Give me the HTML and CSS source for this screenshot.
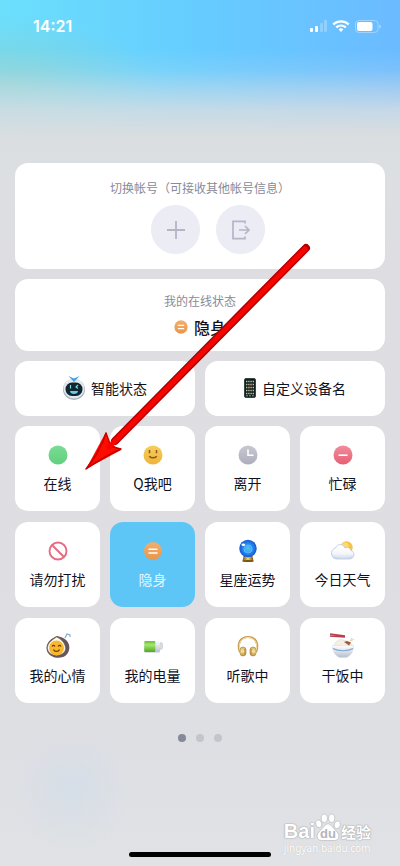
FILE: index.html
```html
<!DOCTYPE html>
<html lang="zh-CN">
<head>
  <meta charset="UTF-8" />
  <meta name="viewport" content="width=device-width, initial-scale=1.0"/>
  <title>我的在线状态</title>
  <link rel="stylesheet" href="styles.css">
</head>
<body>

<svg class="defs" aria-hidden="true">
  <defs>
    <linearGradient id="green" x2="0" y2="1"><stop stop-color="#79dc92"/><stop offset="1" stop-color="#62cf80"/></linearGradient>
    <linearGradient id="yellow" x2="0" y2="1"><stop stop-color="#f4cf5c"/><stop offset="1" stop-color="#efb43b"/></linearGradient>
    <linearGradient id="grey" x2="0" y2="1"><stop stop-color="#c8c8d2"/><stop offset="1" stop-color="#adaebc"/></linearGradient>
    <linearGradient id="red" x2="0" y2="1"><stop stop-color="#f08d9b"/><stop offset="1" stop-color="#e75f73"/></linearGradient>
    <linearGradient id="orange" x2="0" y2="1"><stop stop-color="#f3ae6e"/><stop offset="1" stop-color="#e99648"/></linearGradient>
    <linearGradient id="gold" x2="0" y2="1"><stop stop-color="#d8b568"/><stop offset=".5" stop-color="#f5dfa0"/><stop offset="1" stop-color="#b98b34"/></linearGradient>
    <linearGradient id="base" x2="1" y2="0"><stop stop-color="#7c5414"/><stop offset=".5" stop-color="#f3d26b"/><stop offset="1" stop-color="#7a4d12"/></linearGradient>
    <radialGradient id="ball"><stop stop-color="#52c3fa"/><stop offset=".6" stop-color="#2484ee"/><stop offset="1" stop-color="#1558cf"/></radialGradient>
    <linearGradient id="cell" x2="0" y2="1"><stop stop-color="#69bd35"/><stop offset=".35" stop-color="#a6e871"/><stop offset="1" stop-color="#4ea91e"/></linearGradient>
    <linearGradient id="silver" x2="0" y2="1"><stop stop-color="#ffffff"/><stop offset="1" stop-color="#b7bfce"/></linearGradient>
    <linearGradient id="cloud" x2="0" y2="1"><stop stop-color="#ffffff"/><stop offset=".6" stop-color="#f6f7fb"/><stop offset="1" stop-color="#cfd9ec"/></linearGradient>
  </defs>
</svg>

<header class="status-bar">
  <time class="clock">14:21</time>
  <div class="signals">
    <svg width="17" height="12" viewBox="0 0 17 12" fill="#fff">
      <rect x="0" y="8" width="3" height="4" rx="1"/>
      <rect x="5" y="6" width="3" height="6" rx="1"/>
      <rect x="10" y="3" width="3" height="9" rx="1" opacity=".25"/>
      <rect x="14" y="0" width="3" height="12" rx="1" opacity=".25"/>
    </svg>
    <svg width="18" height="12" viewBox="0 0 18 12" fill="none" stroke="#fff" stroke-width="2.2">
      <path d="M1.2 4.4a11.3 11.3 0 0 1 15.6 0M4.2 7.4a7 7 0 0 1 9.6 0"/>
      <path d="M6.600 9.300a3.500 3.500 0 0 1 4.800 0L9 12z" fill="#fff" stroke="none"/>
    </svg>
    <svg width="26" height="13" viewBox="0 0 26 13">
      <rect x=".5" y=".5" width="22.500" height="12" rx="3.500" fill="none" stroke="#fff" opacity=".35"/>
      <rect x="2" y="2" width="15.500" height="9" rx="2" fill="#fff"/>
      <path d="M24.300 4.500c2 .7 2 3.300 0 4z" fill="#fff" opacity=".5"/>
    </svg>
  </div>
</header>

<main class="panel">
  <section class="card accounts">
    <h2 class="caption">切换帐号（可接收其他帐号信息）</h2>
    <div class="account-actions">
      <button class="round" type="button" aria-label="添加帐号">
        <svg width="18" height="18" viewBox="0 0 18 18" stroke="#b4b5c7" stroke-width="1.800"><path d="M9 0v18M0 9h18"/></svg>
      </button>
      <button class="round" type="button" aria-label="退出帐号">
        <svg width="20" height="20" viewBox="0 0 20 20" fill="none" stroke="#b4b5c7" stroke-width="1.700"><path d="M14 3.500V1.300H2v17.400h12v-2.200M8 10h10M14 6l4 4-4 4"/></svg>
      </button>
    </div>
  </section>

  <section class="card current">
    <h2 class="caption">我的在线状态</h2>
    <p class="current-state">
      <svg width="14" height="14" viewBox="0 0 20 20"><circle cx="10" cy="10" r="9.500" fill="url(#orange)"/><path d="M5.500 7.800h9M5.500 12.200h9" stroke="#fff" stroke-width="1.800"/></svg>
      隐身
    </p>
  </section>

  <div class="wide-row">
    <button class="card wide" type="button">
      <svg width="22" height="24" viewBox="0 0 22 24">
        <ellipse cx="11" cy="13.500" rx="11" ry="10.500" fill="#a9b4bc"/>
        <ellipse cx="11" cy="12.500" rx="10.500" ry="10" fill="#e3e9ec"/>
        <rect x="2.500" y="6.500" width="17" height="13.500" rx="6.500" fill="#10272f"/>
        <path d="M5.500 0l5.500 2.500L16.500 0 11 6z" fill="#3fa1ee"/>
        <path d="M7.500 9v3.500M15 9l-2 2 2 1.500" stroke="#75dbed" stroke-width="1.200" fill="none"/>
        <path d="M7 15h8c0 4-8 4-8 0z" fill="#69c9f5"/>
      </svg>
      智能状态
    </button>
    <button class="card wide" type="button">
      <svg width="12" height="20" viewBox="0 0 12 20">
        <rect x=".5" y=".5" width="11" height="19" rx="1.500" fill="#111c1b" stroke="#304744"/>
        <path d="M2 3.500h8M2 6.500h8M2 9.500h8M2 12.500h8M2 15.500h8" stroke="#b8c2a6" stroke-width="1.400" stroke-dasharray="1.400 .8"/>
        <path d="M6.400 6.500h1.400M4.200 9.500h1.400" stroke="#d46252" stroke-width="1.400"/>
        <path d="M2 17.800h8" stroke="#5fbd79" stroke-dasharray="2 1"/>
      </svg>
      自定义设备名
    </button>
  </div>

  <div class="grid">
    <button class="card tile" type="button">
      <svg class="icon" viewBox="0 0 26 26"><circle cx="13" cy="13" r="9.500" fill="url(#green)"/></svg>
      在线
    </button>
    <button class="card tile" type="button">
      <svg class="icon" viewBox="0 0 26 26"><circle cx="13" cy="13" r="9.500" fill="url(#yellow)"/><path d="M9.500 8v3.300M16.500 8v3.300M9.200 14.200c2 2.200 5.600 2.200 7.600 0" stroke="#94541e" stroke-width="1.500" fill="none"/></svg>
      Q我吧
    </button>
    <button class="card tile" type="button">
      <svg class="icon" viewBox="0 0 26 26"><circle cx="13" cy="13" r="9.500" fill="url(#grey)"/><path d="M13 7.500v5.700h5.500" stroke="#fff" stroke-width="1.600" fill="none"/></svg>
      离开
    </button>
    <button class="card tile" type="button">
      <svg class="icon" viewBox="0 0 26 26"><circle cx="13" cy="13" r="9.500" fill="url(#red)"/><path d="M8.500 13.200h9" stroke="#fff" stroke-width="1.600"/></svg>
      忙碌
    </button>

    <button class="card tile" type="button">
      <svg class="icon" viewBox="0 0 26 26" fill="none" stroke="#e66d81" stroke-width="1.900"><circle cx="13" cy="13" r="8.500"/><path d="M7 7l12 12"/></svg>
      请勿打扰
    </button>
    <button class="card tile active" type="button" aria-pressed="true">
      <svg class="icon" viewBox="0 0 26 26"><circle cx="13" cy="13" r="9" fill="url(#orange)"/><path d="M8.500 11.200h9M8.500 15h9" stroke="#fff" stroke-width="1.600"/></svg>
      隐身
    </button>
    <button class="card tile" type="button">
      <svg class="icon" viewBox="0 0 26 26">
        <path d="M8.500 18h9l1 5.500h-11z" fill="url(#base)"/><ellipse cx="13" cy="23" rx="5.500" ry="1" fill="#7d5112"/>
        <circle cx="13" cy="10.500" r="8.700" fill="url(#ball)"/><circle cx="13" cy="11" r="4" fill="none" stroke="#70d2ff" stroke-width=".6"/>
        <path d="M9 13l4-5 4 5z" fill="none" stroke="#5fc4fa" stroke-width=".6"/><ellipse cx="8.300" cy="6.700" rx="1.800" ry="1.300" fill="#fff"/>
      </svg>
      星座运势
    </button>
    <button class="card tile" type="button">
      <svg class="icon" viewBox="0 0 26 26">
        <circle cx="16.500" cy="9.500" r="6.200" fill="#f6c443"/><circle cx="15" cy="8" r="3.500" fill="#fadb79"/>
        <path d="M7 21a5.700 5.700 0 0 1-1.200-11.200C7 5.500 13.500 5.500 15 10c3-1.500 5.500.3 5.800 2.300 4.800 1.500 3.800 8.700-1.300 8.700z" fill="url(#cloud)" stroke="#b9c5dc" stroke-width=".8"/>
        <path d="M4 18.500c3 2.500 15 2.500 18 0" stroke="#c7d5ef" stroke-width=".8" fill="none"/>
      </svg>
      今日天气
    </button>

    <button class="card tile" type="button">
      <svg class="icon" viewBox="0 0 26 26">
        <path d="M1.500 14C1.500 8 7 4 12 2c3 1 4 1 7 2.500 8 4.500 6.500 16-1 18.500-7 2.500-16.500-1-16.500-9z" fill="#665659"/>
        <path d="M2.500 14C2.500 8.500 8 5.500 11.500 3 16 5 20.500 9 20.500 14.500c0 9-18 9-18-.5z" fill="#fffaf0" stroke="#755e4b" stroke-width=".6"/>
        <circle cx="11.500" cy="14" r="7.500" fill="#f8b82b"/>
        <path d="M7 12.500c1-1.500 2-1.500 3 0M13 12.500c1-1.500 2-1.500 3 0M8.500 15.500c1 2.500 5 2.500 6 0" stroke="#70370d" stroke-width="1.200" fill="none"/>
        <path d="M20 4l2-4 3 1v2" stroke="#7fa9d2" stroke-width="1.200" fill="none"/>
      </svg>
      我的心情
    </button>
    <button class="card tile" type="button">
      <svg class="icon" viewBox="0 0 26 26">
        <rect x="18" y="8.500" width="4.500" height="7" rx="2" fill="#d5dbe1" stroke="#b5bdc7" stroke-width=".5"/>
        <rect x="4" y="6.500" width="16" height="12" rx="1.500" fill="url(#silver)"/>
        <rect x="4.300" y="7" width="11" height="11" rx="1" fill="url(#cell)"/>
      </svg>
      我的电量
    </button>
    <button class="card tile" type="button">
      <svg class="icon" viewBox="0 0 26 26">
        <path d="M5 18C1.500 9 6 3 13 3s11.500 6 8 15" fill="none" stroke="#c69b48" stroke-width="2.200"/>
        <path d="M5 17C2.500 9 6.500 3.500 13 3.500S23.500 9 21 17" fill="none" stroke="#f8e4ac" stroke-width="1"/>
        <rect x="5" y="13" width="6" height="9" rx="3" fill="url(#gold)" stroke="#b28b40" stroke-width=".7"/>
        <rect x="15" y="13" width="6" height="9" rx="3" fill="url(#gold)" stroke="#b28b40" stroke-width=".7"/>
        <path d="M10 14.500v6M16 14.500v6" stroke="#a3782f" stroke-width="1"/>
      </svg>
      听歌中
    </button>
    <button class="card tile" type="button">
      <svg class="icon" viewBox="0 0 26 26">
        <path d="M4 12C5 7 9 5 13 6s9 2 10 7z" fill="#f5f0e6" stroke="#ddd7ca" stroke-width=".6"/>
        <path d="M2.500 11.500h21c0 7-3 10-7 12h-7c-4-2-7-5-7-12z" fill="url(#silver)" stroke="#d5d8de" stroke-width=".5"/>
        <path d="M3 14.500c5 3 15 3 20 0" stroke="#7ba9d5" stroke-width="1.200" fill="none"/>
        <path d="M14 8l3-1 4 1.500-2 3z" fill="#a65a31"/><path d="M20 7l2-3M21 7l3-2" stroke="#d8cfaa" stroke-width="1"/>
        <path d="M0 0l15 2M0 2l15 1" stroke="#b6404c" stroke-width="1.500"/>
      </svg>
      干饭中
    </button>
  </div>

  <nav class="dots" aria-label="分页">
    <button class="dot on" type="button" aria-label="第1页"></button>
    <button class="dot" type="button" aria-label="第2页"></button>
    <button class="dot" type="button" aria-label="第3页"></button>
  </nav>
</main>

<div class="home-indicator"></div>

<div class="watermark">
  <div class="brand">
    <span class="latin">Bai</span>
    <span class="paw">
      <svg width="26" height="28" viewBox="0 0 28 29" fill="#fff" stroke="#b9bbc0" stroke-width=".8">
        <ellipse cx="4" cy="10" rx="3.300" ry="4.300" transform="rotate(-15 4 10)"/><ellipse cx="10" cy="4" rx="3.300" ry="4.500"/>
        <ellipse cx="18" cy="4" rx="3.300" ry="4.500"/><ellipse cx="24" cy="11" rx="3.300" ry="4.300" transform="rotate(15 24 11)"/>
        <path d="M14 10c3 0 5 4 8 7 6 5 4 11-1 11H7c-5 0-7-6-1-11 3-3 5-7 8-7z"/>
      </svg>
      <span class="du">du</span>
    </span>
    <span class="cn">经验</span>
  </div>
  <div class="site">jingyan.baidu.com</div>
</div>

<!-- pointer to the online tile -->
<svg class="arrow" width="224" height="226" viewBox="0 0 224 226" aria-hidden="true">
  <path d="M221 3L30 196" stroke="#b00000" stroke-width="8" stroke-linecap="round"/>
  <path d="M1 224L21 187l3 10 11 8h1L1 224z" fill="#ff0b00"/>
  <path d="M1 224Q15 207 21 188L25 199 28 202 36 204Q20 211 1 224z" fill="#ff0b00" stroke="#c70000" stroke-width="1.500" stroke-linejoin="round"/>
  <path d="M220 4L24 202" stroke="#f60500" stroke-width="5" stroke-linecap="round"/>
</svg>

</body>
</html>
```
FILE: styles.css
```css
* {
  box-sizing: border-box;
}
body {
  margin: 0;
  min-height: 100vh;
  position: relative;
  display: flex;
  flex-direction: column;
  font-family: "Noto Sans CJK SC", sans-serif;
  color: #10111f;
  background:
    radial-gradient(circle at 72px 790px, rgba(205, 220, 235, 0.5), transparent 60px),
    linear-gradient(to bottom, rgba(221, 224, 226, 0) 50px, rgba(221, 224, 226, 0.15) 70px, rgba(219, 223, 227, 0.5) 90px, rgba(217, 222, 226, 0.82) 110px, #d9dde0 135px, #dcdfe2 160px, #dedee2 240px, #dedfe3 750px, #e0e2e5 866px),
    radial-gradient(ellipse 160px 70px at 0 85px, rgba(145, 205, 200, 0.7), rgba(145, 205, 200, 0)),
    linear-gradient(to right, #6bdffc, #66ccff 50%, #6bbbff);
}
h2, p {
  margin: 0;
}
svg {
  display: block;
  flex: none;
  overflow: visible;
}
button {
  padding: 0;
  border: none;
  font: inherit;
  color: inherit;
  cursor: pointer;
}
.defs {
  position: absolute;
  width: 0;
  height: 0;
}
.status-bar {
  height: 163px;
  padding: 14px 19px 0 33px;
  display: flex;
  justify-content: space-between;
  align-items: flex-start;
  color: #fff;
}
.clock {
  font: 600 16px/24px Inter, sans-serif;
}
.signals {
  height: 24px;
  display: flex;
  align-items: center;
  gap: 5px;
}
.panel {
  padding: 0 15px;
  display: flex;
  flex-direction: column;
  gap: 10px;
}
.card {
  background: #fff;
  border-radius: 13px;
}
.caption {
  font-size: 12px;
  line-height: 18px;
  font-weight: 400;
  color: #898a99;
  text-align: center;
}
.accounts {
  padding: 16px 0 15px;
}
.account-actions {
  display: flex;
  justify-content: center;
  gap: 16px;
  margin-top: 8px;
  padding-left: 16px;
}
.round {
  width: 49px;
  height: 49px;
  border-radius: 50%;
  background: #ebecf4;
  display: flex;
  align-items: center;
  justify-content: center;
}
.current {
  padding: 13px 0 12px;
}
.current-state {
  display: flex;
  align-items: center;
  justify-content: center;
  gap: 6px;
  margin-top: 5px;
  font-size: 16px;
  line-height: 24px;
  font-weight: 500;
}
.wide-row {
  display: grid;
  grid-template-columns: 1fr 1fr;
  gap: 10px;
}
.wide {
  height: 55px;
  padding-bottom: 2px;
  display: flex;
  align-items: center;
  justify-content: center;
  gap: 6px;
  font-size: 14px;
}
.grid {
  display: grid;
  grid-template-columns: repeat(4, 1fr);
  gap: 11px 10px;
}
.tile {
  height: 85px;
  padding-bottom: 2px;
  display: flex;
  flex-direction: column;
  align-items: center;
  justify-content: center;
  gap: 4px;
  font-size: 14px;
  line-height: 22px;
}
.icon {
  width: 26px;
  height: 26px;
}
.active {
  background: #5dc6f7;
  color: #e4f6ff;
}
.dots {
  display: flex;
  justify-content: center;
  gap: 10px;
  margin-top: 21px;
}
.dot {
  width: 8px;
  height: 8px;
  border-radius: 50%;
  background: #c4c5cb;
}
.on {
  background: #858896;
}
.home-indicator {
  width: 142px;
  height: 5px;
  margin: auto auto 9px;
  border-radius: 3px;
  background: #000;
}
.watermark {
  position: absolute;
  right: 29px;
  bottom: 12px;
  color: #fff;
  text-shadow: 0 0 1px #a2a4aa, 0 0 1px #a2a4aa, 0 0 2px #b5b7bc;
}
.brand {
  display: flex;
  align-items: flex-end;
}
.latin {
  font: 700 20px/22px "Liberation Sans", sans-serif;
}
.paw {
  position: relative;
}
.du {
  position: absolute;
  left: 0;
  right: 0;
  bottom: 0;
  text-align: center;
  font: 700 13px/16px "Liberation Sans", sans-serif;
  color: #b3b5ba;
  text-shadow: none;
}
.cn {
  font-size: 15px;
  line-height: 20px;
  font-weight: 700;
}
.site {
  font: 10px/12px "Noto Sans", sans-serif;
  text-shadow: 0 0 1px #b5b7bc;
}
.arrow {
  position: absolute;
  left: 85px;
  top: 245px;
  pointer-events: none;
}
```
